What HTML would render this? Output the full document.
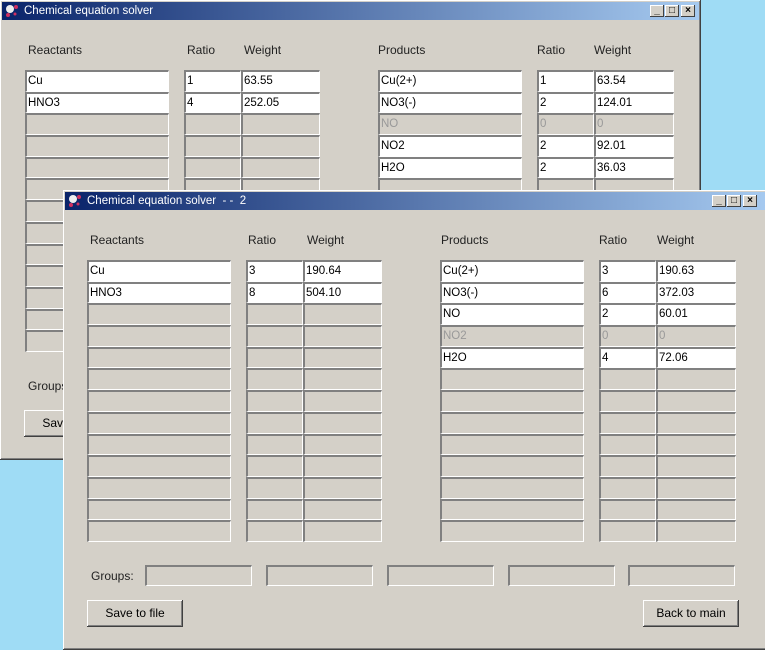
<!DOCTYPE html><html><head><style>
body{margin:0;width:765px;height:650px;background:#9fdcf5;position:relative;overflow:hidden;font-family:"Liberation Sans",sans-serif;font-size:12px;color:#000}
.win{position:absolute;background:#d4d0c8;box-shadow:inset -1px -1px #404040,inset 1px 1px #fff,inset -2px -2px #808080}
.tb{position:absolute;left:2px;right:2px;top:2px;height:18px;background:linear-gradient(to right,#0a246a,#a6caf0);color:#fff;font-size:11.5px;line-height:18px;padding-left:22px}
.ic{position:absolute;left:3px;top:2px;width:14px;height:14px}
.btns{position:absolute;right:4px;top:3px;display:flex;gap:0}
.b{width:14px;height:12px;background:#d4d0c8;box-shadow:inset -1px -1px #404040,inset 1px 1px #fff;font-size:10px;line-height:12px;text-align:center;color:#000;font-weight:bold;margin-left:1px}
.col{position:absolute;height:282px;display:grid;grid-template-rows:repeat(13,1fr)}
.col div{border-top:2px solid #808080;border-left:2px solid #808080;border-right:1px solid #fff;border-bottom:1px solid #fff;box-sizing:border-box;padding-left:1px;line-height:18px;font-size:11.5px;overflow:hidden;white-space:nowrap}
.col div.w{background:#fff}
.col div.g{color:#999}
.h{position:absolute;font-size:12px;color:#222}
.gb{position:absolute;width:107px;height:21px;box-sizing:border-box;border-top:2px solid #808080;border-left:2px solid #808080;border-right:1px solid #fff;border-bottom:1px solid #fff}
.btn{position:absolute;height:27px;box-sizing:border-box;box-shadow:inset -1px -1px #404040,inset 1px 1px #fff,inset -2px -2px #808080;text-align:center;line-height:27px;font-size:12px}
</style></head><body>

<div class="win" style="left:0;top:0;width:701px;height:460px">
<div class="tb"><svg class="ic" viewBox="0 0 14 14"><circle cx="5" cy="5" r="4" fill="#eee"/><circle cx="11" cy="3" r="2" fill="#d03060"/><circle cx="3" cy="11" r="2" fill="#d03060"/><circle cx="10" cy="10" r="1.5" fill="#d03060"/></svg>Chemical equation solver
<div class="btns"><div class="b">_</div><div class="b">□</div><div class="b" style="margin-left:2px">×</div></div></div>
<div class="h" style="left:28px;top:43px">Reactants</div>
<div class="h" style="left:187px;top:43px">Ratio</div>
<div class="h" style="left:244px;top:43px">Weight</div>
<div class="h" style="left:378px;top:43px">Products</div>
<div class="h" style="left:537px;top:43px">Ratio</div>
<div class="h" style="left:594px;top:43px">Weight</div>
<div class="col" style="left:25px;top:70px;width:144px"><div class="w">Cu</div><div class="w">HNO3</div><div></div><div></div><div></div><div></div><div></div><div></div><div></div><div></div><div></div><div></div><div></div></div>
<div class="col" style="left:184px;top:70px;width:57px"><div class="w">1</div><div class="w">4</div><div></div><div></div><div></div><div></div><div></div><div></div><div></div><div></div><div></div><div></div><div></div></div>
<div class="col" style="left:241px;top:70px;width:79px"><div class="w">63.55</div><div class="w">252.05</div><div></div><div></div><div></div><div></div><div></div><div></div><div></div><div></div><div></div><div></div><div></div></div>
<div class="col" style="left:378px;top:70px;width:144px"><div class="w">Cu(2+)</div><div class="w">NO3(-)</div><div class="g">NO</div><div class="w">NO2</div><div class="w">H2O</div><div></div><div></div><div></div><div></div><div></div><div></div><div></div><div></div></div>
<div class="col" style="left:537px;top:70px;width:57px"><div class="w">1</div><div class="w">2</div><div class="g">0</div><div class="w">2</div><div class="w">2</div><div></div><div></div><div></div><div></div><div></div><div></div><div></div><div></div></div>
<div class="col" style="left:594px;top:70px;width:80px"><div class="w">63.54</div><div class="w">124.01</div><div class="g">0</div><div class="w">92.01</div><div class="w">36.03</div><div></div><div></div><div></div><div></div><div></div><div></div><div></div><div></div></div>
<div class="h" style="left:28px;top:379px">Groups:</div>
<div class="btn" style="left:24px;top:410px;width:96px">Save to file</div>
</div>

<div class="win" style="left:63px;top:190px;width:706px;height:460px">
<div class="tb"><svg class="ic" viewBox="0 0 14 14"><circle cx="5" cy="5" r="4" fill="#eee"/><circle cx="11" cy="3" r="2" fill="#d03060"/><circle cx="3" cy="11" r="2" fill="#d03060"/><circle cx="10" cy="10" r="1.5" fill="#d03060"/></svg>Chemical equation solver &nbsp;- - &nbsp;2
<div class="btns" style="right:10px"><div class="b">_</div><div class="b">□</div><div class="b" style="margin-left:2px">×</div></div></div>
<div class="h" style="left:27px;top:43px">Reactants</div>
<div class="h" style="left:185px;top:43px">Ratio</div>
<div class="h" style="left:244px;top:43px">Weight</div>
<div class="h" style="left:378px;top:43px">Products</div>
<div class="h" style="left:536px;top:43px">Ratio</div>
<div class="h" style="left:594px;top:43px">Weight</div>
<div class="col" style="left:24px;top:70px;width:144px"><div class="w">Cu</div><div class="w">HNO3</div><div></div><div></div><div></div><div></div><div></div><div></div><div></div><div></div><div></div><div></div><div></div></div>
<div class="col" style="left:183px;top:70px;width:57px"><div class="w">3</div><div class="w">8</div><div></div><div></div><div></div><div></div><div></div><div></div><div></div><div></div><div></div><div></div><div></div></div>
<div class="col" style="left:240px;top:70px;width:79px"><div class="w">190.64</div><div class="w">504.10</div><div></div><div></div><div></div><div></div><div></div><div></div><div></div><div></div><div></div><div></div><div></div></div>
<div class="col" style="left:377px;top:70px;width:144px"><div class="w">Cu(2+)</div><div class="w">NO3(-)</div><div class="w">NO</div><div class="g">NO2</div><div class="w">H2O</div><div></div><div></div><div></div><div></div><div></div><div></div><div></div><div></div></div>
<div class="col" style="left:536px;top:70px;width:57px"><div class="w">3</div><div class="w">6</div><div class="w">2</div><div class="g">0</div><div class="w">4</div><div></div><div></div><div></div><div></div><div></div><div></div><div></div><div></div></div>
<div class="col" style="left:593px;top:70px;width:80px"><div class="w">190.63</div><div class="w">372.03</div><div class="w">60.01</div><div class="g">0</div><div class="w">72.06</div><div></div><div></div><div></div><div></div><div></div><div></div><div></div><div></div></div>
<div class="h" style="left:28px;top:379px">Groups:</div>
<div class="gb" style="left:82px;top:375px"></div>
<div class="gb" style="left:203px;top:375px"></div>
<div class="gb" style="left:324px;top:375px"></div>
<div class="gb" style="left:445px;top:375px"></div>
<div class="gb" style="left:565px;top:375px"></div>
<div class="btn" style="left:24px;top:410px;width:96px">Save to file</div>
<div class="btn" style="left:580px;top:410px;width:96px">Back to main</div>
</div>
</body></html>
